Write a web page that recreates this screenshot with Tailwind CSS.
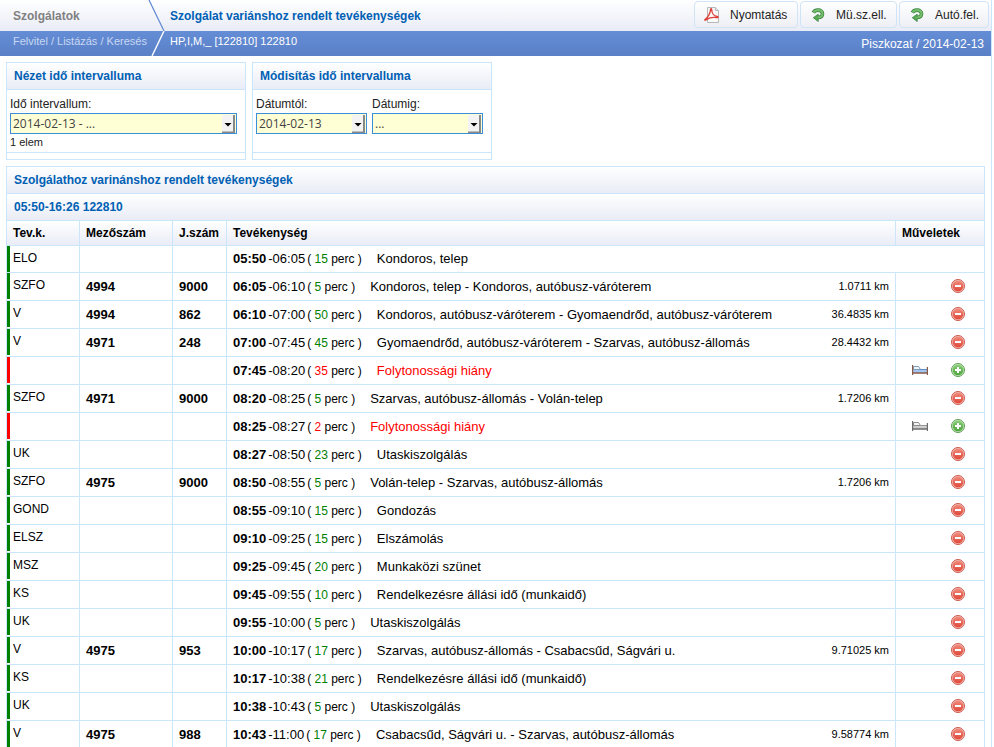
<!DOCTYPE html>
<html lang="hu">
<head>
  <meta charset="utf-8">
  <meta name="viewport" content="width=device-width, initial-scale=1.0">
  <title>Szolgálat variánshoz rendelt tevékenységek</title>
  <script src="https://cdn.jsdelivr.net/npm/@tailwindcss/browser@4"></script>
</head>
<body class="bg-white font-['Liberation_Sans',Arial,sans-serif] text-[12px] text-black overflow-x-hidden">
  <!-- icon sprites -->
  <svg class="absolute size-0">
    <defs>
      <linearGradient id="gRed" x1="0" y1="0" x2="0" y2="1"><stop offset="0" stop-color="#f08a7c"/><stop offset="1" stop-color="#e0483a"/></linearGradient>
      <linearGradient id="gGreen" x1="0" y1="0" x2="0" y2="1"><stop offset="0" stop-color="#86cc74"/><stop offset="1" stop-color="#4fa33f"/></linearGradient>
    </defs>
    <symbol id="icoMinus" viewBox="0 0 14 14">
      <circle cx="7" cy="7" r="6.5" fill="#f6b9b0" stroke="#c9584c"/>
      <circle cx="7" cy="7" r="5.3" fill="url(#gRed)"/>
      <rect x="4" y="6" width="6" height="2" fill="#fff"/>
    </symbol>
    <symbol id="icoPlus" viewBox="0 0 14 14">
      <circle cx="7" cy="7" r="6.5" fill="#c4e6ba" stroke="#5a9e4e"/>
      <circle cx="7" cy="7" r="5.3" fill="url(#gGreen)"/>
      <path d="M6 4h2v2h2v2H8v2H6V8H4V6h2z" fill="#fff"/>
    </symbol>
    <symbol id="icoBed" viewBox="0 0 16 10">
      <rect x="1" y="4" width="14" height="4" fill="#a3c6f0"/>
      <path d="M1.500 4.500V1.500h5l2 3z" fill="#eef5fc" stroke="#7d9cb8"/>
      <path d="M8 4.500h7" stroke="#5f8cc6"/>
      <path d="M.5 0v10M15.500 2v8M1 8h14" stroke="#8a5a48" stroke-width="1.400" fill="none"/>
    </symbol>
    <symbol id="icoBedGray" viewBox="0 0 16 10">
      <rect x="1" y="4" width="14" height="4" fill="#cfcfcf"/>
      <path d="M1.500 4.500V1.500h5l2 3z" fill="#f4f4f4" stroke="#8c8c8c"/>
      <path d="M8 4.500h7" stroke="#999"/>
      <path d="M.5 0v10M15.500 2v8M1 8h14" stroke="#6c6c6c" stroke-width="1.400" fill="none"/>
    </symbol>
    <symbol id="icoArrow" viewBox="0 0 14 14">
      <path d="M2.300 4.600C3.200 2.900 5 2.100 7 2.100c2.600 0 4.500 1.500 4.500 3.700S9.700 9.500 6.500 9.500" fill="none" stroke="#35823c" stroke-width="3.600"/>
      <path d="M7.200 6.200v7.300L2.300 9.700z" fill="#58aa54" stroke="#35823c" stroke-width=".8"/>
      <path d="M2.600 4.400C3.500 2.800 5.200 2.100 7 2.100c2.600 0 4.500 1.500 4.500 3.700S9.700 9.500 6.500 9.500" fill="none" stroke="#74bd6c" stroke-width="2.200"/>
    </symbol>
    <symbol id="icoPdf" viewBox="0 0 16 16">
      <path d="M3.500.5h8l3 3v12h-11z" fill="#fafafa" stroke="#b8b8b8"/>
      <path d="M11.500.5v3h3" fill="#e4e4e4" stroke="#b8b8b8"/>
      <path d="M.9 12.600C3.700 10.900 6.300 6.300 6.600 2.400c.1-1 1.100-1 1.100.1 0 3.200 2 6.500 5.500 7 1.300.2 1.100 1.300-.2 1.100-3.300-.5-7.900.1-10.700 2-1 .7-1.900.6-1.400 0z" fill="none" stroke="#dc4038" stroke-width="1.300"/>
    </symbol>
  </svg>

  <div class="mr-[2px] border-r border-[#c9e6fa] h-screen overflow-hidden">
    <header>
      <div class="flex h-[31px] bg-linear-to-b from-white to-[#e9ecf6]">
        <h2 class="w-[148px] shrink-0 pl-[13px] leading-8 font-bold text-[#808080]">Szolgálatok</h2>
        <svg class="w-[17px] h-[31px] shrink-0" viewBox="0 0 17 31"><path d="M1 0l15 31" stroke="#5f87d0" stroke-width="1.200"/></svg>
        <h1 class="grow pl-[5px] leading-8 font-bold text-[#0060b4]">Szolgálat variánshoz rendelt tevékenységek</h1>
        <div class="flex gap-[2px] pt-px pr-[2px] text-[#222]">
          <button type="button" class="flex items-center h-[27px] w-[104px] pl-[9px] gap-[10px] border border-[#cfe4f6] rounded-[4px] bg-linear-to-b from-white to-[#eeeff5]"><svg class="size-4 shrink-0"><use href="#icoPdf"/></svg>Nyomtatás</button>
          <button type="button" class="flex items-center h-[27px] w-[97px] pl-[10px] gap-[11px] border border-[#cfe4f6] rounded-[4px] bg-linear-to-b from-white to-[#eeeff5]"><svg class="size-[14px] shrink-0"><use href="#icoArrow"/></svg>Mü.sz.ell.</button>
          <button type="button" class="flex items-center h-[27px] w-[90px] pl-[10px] gap-[11px] border border-[#cfe4f6] rounded-[4px] bg-linear-to-b from-white to-[#eeeff5]"><svg class="size-[14px] shrink-0"><use href="#icoArrow"/></svg>Autó.fel.</button>
        </div>
      </div>
      <div class="flex h-[25px] bg-linear-to-b from-[#648dd6] to-[#5a80c6] text-white">
        <nav class="w-[148px] shrink-0 pl-[13px] text-[11px] leading-5 text-[#c8d7f2] whitespace-nowrap"><a href="#">Felvitel</a> / <a href="#">Listázás</a> / <a href="#">Keresés</a></nav>
        <svg class="w-[17px] h-[25px] shrink-0" viewBox="0 0 17 25"><path d="M16 0L4 25" stroke="#fff" stroke-width="1.400"/></svg>
        <p class="grow pl-[5px] text-[11px] leading-5">HP,I,M,_ [122810] 122810</p>
        <p class="pr-[7px] leading-[26px]">Piszkozat / 2014-02-13</p>
      </div>
    </header>

    <main class="px-[6px] pt-[6px]">
      <form class="flex gap-[6px] text-[#222]">
        <section class="w-[240px] border border-[#c9e6fa]">
          <h3 class="h-[27px] pl-[7px] leading-[26px] font-bold text-[#0060b4] border-b border-[#c9e6fa] bg-linear-to-b from-white to-[#e9ecf6]">Nézet idő intervalluma</h3>
          <div class="h-[63px] px-[3px] pt-[6px] border-b border-[#c9e6fa]">
            <label for="interval" class="block leading-[17px]">Idő intervallum:</label>
            <div class="relative w-[227px]">
              <select id="interval" class="appearance-none block w-full h-[21px] pl-[2px] border border-[#3a8fd6] bg-[#ffffd6] font-['Open_Sans',sans-serif] text-[12px] text-[#444]"><option>2014-02-13 - ...</option></select>
              <svg class="absolute right-[2px] top-[2px] w-[13px] h-[18px] pointer-events-none" viewBox="0 0 13 18"><path d="M0 0h12v18H0z" fill="#f3f3f3"/><path d="M12 0v17.500H0" fill="none" stroke="#888" stroke-width="2"/><path d="M2.500 8h7L6 11.500z"/></svg>
            </div>
            <p class="text-[11px] leading-4">1 elem</p>
          </div>
          <div class="h-[6px]"></div>
        </section>
        <section class="w-[240px] border border-[#c9e6fa]">
          <h3 class="h-[27px] pl-[7px] leading-[26px] font-bold text-[#0060b4] border-b border-[#c9e6fa] bg-linear-to-b from-white to-[#e9ecf6]">Módisítás idő intervalluma</h3>
          <div class="flex gap-[5px] h-[63px] px-[3px] pt-[6px] border-b border-[#c9e6fa]">
            <div class="w-[111px]">
              <label for="from" class="block leading-[17px]">Dátumtól:</label>
              <div class="relative">
                <select id="from" class="appearance-none block w-full h-[21px] pl-[2px] border border-[#3a8fd6] bg-[#ffffd6] font-['Open_Sans',sans-serif] text-[12px] text-[#444]"><option>2014-02-13</option></select>
                <svg class="absolute right-[2px] top-[2px] w-[13px] h-[18px] pointer-events-none" viewBox="0 0 13 18"><path d="M0 0h12v18H0z" fill="#f3f3f3"/><path d="M12 0v17.500H0" fill="none" stroke="#888" stroke-width="2"/><path d="M2.500 8h7L6 11.500z"/></svg>
              </div>
            </div>
            <div class="w-[111px]">
              <label for="to" class="block leading-[17px]">Dátumig:</label>
              <div class="relative">
                <select id="to" class="appearance-none block w-full h-[21px] pl-[2px] border border-[#3a8fd6] bg-[#ffffd6] font-['Open_Sans',sans-serif] text-[12px] text-[#444]"><option>...</option></select>
                <svg class="absolute right-[2px] top-[2px] w-[13px] h-[18px] pointer-events-none" viewBox="0 0 13 18"><path d="M0 0h12v18H0z" fill="#f3f3f3"/><path d="M12 0v17.500H0" fill="none" stroke="#888" stroke-width="2"/><path d="M2.500 8h7L6 11.500z"/></svg>
              </div>
            </div>
          </div>
          <div class="h-[6px]"></div>
        </section>
      </form>

      <section class="mt-[6px] border border-[#c9e6fa]">
        <h3 class="h-[27px] pl-[7px] leading-[26px] font-bold text-[#0060b4] border-b border-[#c9e6fa] bg-linear-to-b from-white to-[#e9ecf6]">Szolgálathoz varinánshoz rendelt tevékenységek</h3>
        <h4 class="h-[27px] pl-[7px] leading-[26px] font-bold text-[#0060b4] border-b border-[#c9e6fa] bg-linear-to-b from-white to-[#e9ecf6]">05:50-16:26 122810</h4>
        <table class="w-full table-fixed border-separate border-spacing-0">
          <thead>
            <tr class="h-[25px] text-left bg-linear-to-b from-white to-[#e9ecf6]">
              <th class="w-[73px] pl-[6px] border-r border-b border-[#c9e6fa]">Tev.k.</th>
              <th class="w-[93px] pl-[6px] border-r border-b border-[#c9e6fa]">Mezőszám</th>
              <th class="w-[54px] pl-[6px] border-r border-b border-[#c9e6fa]">J.szám</th>
              <th class="pl-[6px] border-r border-b border-[#c9e6fa]">Tevékenység</th>
              <th class="w-[88px] pl-[6px] border-b border-[#c9e6fa]">Műveletek</th>
            </tr>
          </thead>
          <tbody id="rows"></tbody>
        </table>
      </section>
    </main>
  </div>

  <script>
    // code, field number, line number, start, end, minutes, activity, km, bed icon
    const ROWS = [
      ["ELO", "", "", "05:50", "06:05", 15, "Kondoros, telep", ""],
      ["SZFO", "4994", "9000", "06:05", "06:10", 5, "Kondoros, telep - Kondoros, autóbusz-váróterem", "1.0711"],
      ["V", "4994", "862", "06:10", "07:00", 50, "Kondoros, autóbusz-váróterem - Gyomaendrőd, autóbusz-váróterem", "36.4835"],
      ["V", "4971", "248", "07:00", "07:45", 45, "Gyomaendrőd, autóbusz-váróterem - Szarvas, autóbusz-állomás", "28.4432"],
      ["", "", "", "07:45", "08:20", 35, "Folytonossági hiány", "", "icoBed"],
      ["SZFO", "4971", "9000", "08:20", "08:25", 5, "Szarvas, autóbusz-állomás - Volán-telep", "1.7206"],
      ["", "", "", "08:25", "08:27", 2, "Folytonossági hiány", "", "icoBedGray"],
      ["UK", "", "", "08:27", "08:50", 23, "Utaskiszolgálás", ""],
      ["SZFO", "4975", "9000", "08:50", "08:55", 5, "Volán-telep - Szarvas, autóbusz-állomás", "1.7206"],
      ["GOND", "", "", "08:55", "09:10", 15, "Gondozás", ""],
      ["ELSZ", "", "", "09:10", "09:25", 15, "Elszámolás", ""],
      ["MSZ", "", "", "09:25", "09:45", 20, "Munkaközi szünet", ""],
      ["KS", "", "", "09:45", "09:55", 10, "Rendelkezésre állási idő (munkaidő)", ""],
      ["UK", "", "", "09:55", "10:00", 5, "Utaskiszolgálás", ""],
      ["V", "4975", "953", "10:00", "10:17", 17, "Szarvas, autóbusz-állomás - Csabacsűd, Ságvári u.", "9.71025"],
      ["KS", "", "", "10:17", "10:38", 21, "Rendelkezésre állási idő (munkaidő)", ""],
      ["UK", "", "", "10:38", "10:43", 5, "Utaskiszolgálás", ""],
      ["V", "4975", "988", "10:43", "11:00", 17, "Csabacsűd, Ságvári u. - Szarvas, autóbusz-állomás", "9.58774"]
    ];

    const cell = "border-r border-b border-[#c9e6fa]";

    document.getElementById("rows").innerHTML = ROWS.map(([code, field, line, start, end, min, name, km, bed], i) => {
      const first = i === 0;
      const gap = Boolean(bed);
      const actions = `
        <td class="border-b border-[#c9e6fa]">
          <div class="flex items-center justify-end gap-[23px] pr-[19px] pb-px">
            ${gap ? `<button type="button" aria-label="Pihenő"><svg class="block w-4 h-[10px]"><use href="#${bed}"/></svg></button>` : ""}
            <button type="button" aria-label="${gap ? "Hozzáadás" : "Törlés"}"><svg class="block size-[14px]"><use href="#${gap ? "icoPlus" : "icoMinus"}"/></svg></button>
          </div>
        </td>`;
      return `
      <tr class="${first ? "h-[27px]" : "h-[28px]"}">
        <td class="${cell} align-top"><div class="h-[26px] pl-[3px] border-l-[3px] leading-6 ${gap ? "border-[#ff0000]" : "border-[#008000]"}">${code}</div></td>
        <td class="${cell} pl-[6px] text-[13px] font-bold">${field}</td>
        <td class="${cell} pl-[6px] text-[13px] font-bold">${line}</td>
        <td ${first ? 'colspan="2"' : ""} class="${first ? "border-b border-[#c9e6fa]" : cell} px-[6px]">
          <div class="flex items-center justify-between whitespace-nowrap">
            <p class="flex items-baseline text-[13px] leading-5"><b class="mr-[2px]">${start}</b>-${end}<span class="ml-[2px] text-[12px]">( <span class="${gap ? "text-[#ff0000]" : "text-[#008000]"}">${min}</span> perc )</span><span class="ml-[15px] ${gap ? "text-[#ff0000]" : ""}">${name}</span></p>
            ${km ? `<span class="text-[11px]">${km} km</span>` : ""}
          </div>
        </td>
        ${first ? "" : actions}
      </tr>`;
    }).join("");
  </script>
</body>
</html>
